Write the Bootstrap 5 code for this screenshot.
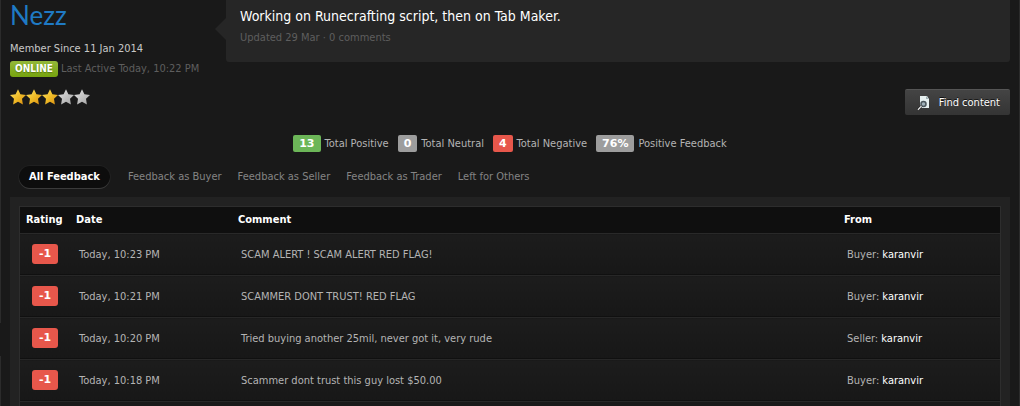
<!DOCTYPE html>
<html lang="en">
<head>
<meta charset="utf-8">
<meta name="viewport" content="width=device-width, initial-scale=1">
<title>Nezz - Feedback</title>
<link rel="stylesheet" href="https://cdn.jsdelivr.net/npm/bootstrap@5.3.0/dist/css/bootstrap.min.css">
<style>
  body { background: #191919; color: #b4b4b4; font: 11px/16px "DejaVu Sans Condensed", "Noto Sans", sans-serif; }
  a { text-decoration: none; }
  .page-shell {
    padding: 0 10px;
    background:
      linear-gradient(#191919, #191919) 0 323px / 1px 33px no-repeat,
      linear-gradient(#2b2b2b, #2b2b2b) 0 0 / 1px 100% no-repeat,
      linear-gradient(#2b2b2b, #2b2b2b) 100% 0 / 1px 100% no-repeat;
  }
  .profile-side { width: 216px; }
  .profile-name { font: 26px/31px Lato, "Open Sans", sans-serif; color: #1f7ac4; margin-bottom: 10px; }
  .member-since { color: #c8c8c8; }
  .dim { color: #5e5e5e; }
  .last-active { gap: 3px; }
  .online { background: linear-gradient(#93b83a, #76a30f); border-radius: 3px; color: #fff; font-size: 10px; line-height: 16px; padding: 0 5px; text-shadow: 0 1px 1px #5b7c12; }
  .status-box { background: #262626; border-radius: 0 0 3px 3px; padding: 6px 14px 16px; }
  .status-box::before { content: ""; position: absolute; left: -11px; top: 18px; border: solid transparent; border-width: 11px 11px 11px 0; border-right-color: #262626; }
  .status-text { font-size: 14px; line-height: 20px; color: #fff; margin-bottom: 4px; }
  .action-row { margin-top: 12px; }
  .btn-find { background: linear-gradient(#444, #343434); border: 0; border-top: 1px solid #555; border-radius: 2px; color: #fff; font-size: 11px; line-height: 16px; padding: 5px 10px 4px 12px; text-shadow: 0 -1px 0 #111; }
  .btn-find:hover { background: #444; color: #fff; }
  .count { font-family: "DejaVu Sans", sans-serif; font-weight: bold; color: #fff; border-radius: 2px; padding: 0 6px; line-height: 17px; margin-right: 4px; }
  .stat-row { gap: 9px; padding: 20px 0 14px; line-height: 17px; }
  .bg-pos { background: #6cb658; }
  .bg-neu { background: #9d9d9d; }
  .bg-neg { background: #e7574b; }
  .feedback-tabs { padding-left: 9px; margin-bottom: 9px; }
  .feedback-tabs .nav-link { color: #848484; padding: 3px 8px; line-height: 16px; }
  .feedback-tabs .nav-link.active { background: #0d0d0d; color: #fff; font-weight: bold; border-radius: 12px; padding: 3px 10px; margin-right: 10px; box-shadow: 0 1px 0 #3a3a3a, 0 0 0 1px #202020; }
  .panel { background: #222; padding: 9px 9px 0; }
  .table-frame { background: #191919; border: 1px solid #2d2d2d; border-bottom: 0; }
  .feedback-table { table-layout: fixed; font-size: 11px; line-height: 16px; color: inherit; }
  .feedback-table th { background: #0f0f0f; color: #fff; padding: 5px 6px; border-bottom: 1px solid #292929; }
  .feedback-table td { color: inherit; background: linear-gradient(#1c1c1c, #171717); padding: 10px 9px; border-top: 0; border-bottom: 1px solid #272727; box-shadow: inset 0 -1px #101010; height: 42px; vertical-align: middle; }
  .feedback-table td:first-child { padding-top: 8px; padding-left: 12px; }
  .feedback-table td a { color: #fff; }
  .feedback-table .score { display: inline-block; width: 26px; line-height: 20px; border-radius: 3px; text-align: center; font-family: "DejaVu Sans", sans-serif; font-weight: bold; color: #fff; vertical-align: middle; }
  .w-rating { width: 50px; }
  .w-date { width: 162px; }
  .w-from { width: 162px; }
</style>
</head>
<body>
<svg width="0" height="0" class="position-absolute" aria-hidden="true">
  <defs>
    <linearGradient id="gold" x1="0" y1="0" x2="1" y2="1"><stop offset="0" stop-color="#ffe36a"/><stop offset=".5" stop-color="#f0bd28"/><stop offset="1" stop-color="#d98a10"/></linearGradient>
    <linearGradient id="silver" x1="0" y1="0" x2="1" y2="1"><stop offset="0" stop-color="#e2e2e2"/><stop offset="1" stop-color="#a4a4a4"/></linearGradient>
    <path id="star" d="M8 .3 10.400 5.200 16 6 12 9.800 12.900 15.400 8 12.800 3.100 15.400 4 9.800 0 6 5.600 5.200Z"/>
  </defs>
</svg>
<div class="page-shell min-vh-100 d-flex flex-column">
  <header class="d-flex">
    <div class="profile-side flex-shrink-0">
      <h1 class="profile-name">Nezz</h1>
      <div class="member-since">Member Since 11 Jan 2014</div>
      <div class="last-active d-flex align-items-center mt-1 text-nowrap">
        <span class="online fw-bold">ONLINE</span><span class="dim">Last Active Today, 10:22 PM</span>
      </div>
    </div>
    <div class="status-box position-relative flex-grow-1 align-self-start">
      <p class="status-text">Working on Runecrafting script, then on Tab Maker.</p>
      <div class="dim">Updated 29 Mar · 0 comments</div>
    </div>
  </header>

  <div class="action-row d-flex justify-content-between align-items-start">
    <div class="d-flex" role="img" aria-label="Rated 3 out of 5">
      <svg width="16" height="16" viewBox="0 0 16 16" fill="url(#gold)"><use href="#star"/></svg>
      <svg width="16" height="16" viewBox="0 0 16 16" fill="url(#gold)"><use href="#star"/></svg>
      <svg width="16" height="16" viewBox="0 0 16 16" fill="url(#gold)"><use href="#star"/></svg>
      <svg width="16" height="16" viewBox="0 0 16 16" fill="url(#silver)"><use href="#star"/></svg>
      <svg width="16" height="16" viewBox="0 0 16 16" fill="url(#silver)"><use href="#star"/></svg>
    </div>
    <button type="button" class="btn btn-find d-flex align-items-center gap-2">
      <svg width="14" height="16" viewBox="0 0 14 16"><path d="M3 1h7l2 3v9H3z" fill="#e6efef"/><path d="M9 1v3h3z" fill="#9fb0b4"/><circle cx="6.500" cy="9" r="2.500" fill="#9fb0b8" stroke="#4b565c" stroke-width="1.500"/><path d="M4.500 11 1 14.700" stroke="#1b1b1b" stroke-width="2.500"/><path d="M4.500 11 1 14.700" stroke="#e8e8e8" stroke-width="1.300"/></svg>
      Find content
    </button>
  </div>

  <div class="stat-row d-flex flex-wrap justify-content-center">
    <div><span class="count bg-pos d-inline-block">13</span>Total Positive</div>
    <div><span class="count bg-neu d-inline-block">0</span>Total Neutral</div>
    <div><span class="count bg-neg d-inline-block">4</span>Total Negative</div>
    <div><span class="count bg-neu d-inline-block">76%</span>Positive Feedback</div>
  </div>

  <ul class="feedback-tabs nav">
    <li class="nav-item"><a class="nav-link active" aria-current="page" href="#">All Feedback</a></li>
    <li class="nav-item"><a class="nav-link" href="#">Feedback as Buyer</a></li>
    <li class="nav-item"><a class="nav-link" href="#">Feedback as Seller</a></li>
    <li class="nav-item"><a class="nav-link" href="#">Feedback as Trader</a></li>
    <li class="nav-item"><a class="nav-link" href="#">Left for Others</a></li>
  </ul>

  <main class="panel flex-grow-1 d-flex flex-column">
    <div class="table-frame flex-grow-1">
      <table class="feedback-table table table-borderless mb-0">
        <colgroup><col class="w-rating"><col class="w-date"><col><col class="w-from"></colgroup>
        <thead><tr><th scope="col">Rating</th><th scope="col">Date</th><th scope="col">Comment</th><th scope="col">From</th></tr></thead>
        <tbody>
          <tr><td><span class="score bg-neg">-1</span></td><td>Today, 10:23 PM</td><td>SCAM ALERT ! SCAM ALERT RED FLAG!</td><td>Buyer: <a href="#">karanvir</a></td></tr>
          <tr><td><span class="score bg-neg">-1</span></td><td>Today, 10:21 PM</td><td>SCAMMER DONT TRUST! RED FLAG</td><td>Buyer: <a href="#">karanvir</a></td></tr>
          <tr><td><span class="score bg-neg">-1</span></td><td>Today, 10:20 PM</td><td>Tried buying another 25mil, never got it, very rude</td><td>Seller: <a href="#">karanvir</a></td></tr>
          <tr><td><span class="score bg-neg">-1</span></td><td>Today, 10:18 PM</td><td>Scammer dont trust this guy lost $50.00</td><td>Buyer: <a href="#">karanvir</a></td></tr>
        </tbody>
      </table>
    </div>
  </main>
</div>
<script src="https://cdn.jsdelivr.net/npm/bootstrap@5.3.0/dist/js/bootstrap.bundle.min.js"></script>
</body>
</html>
